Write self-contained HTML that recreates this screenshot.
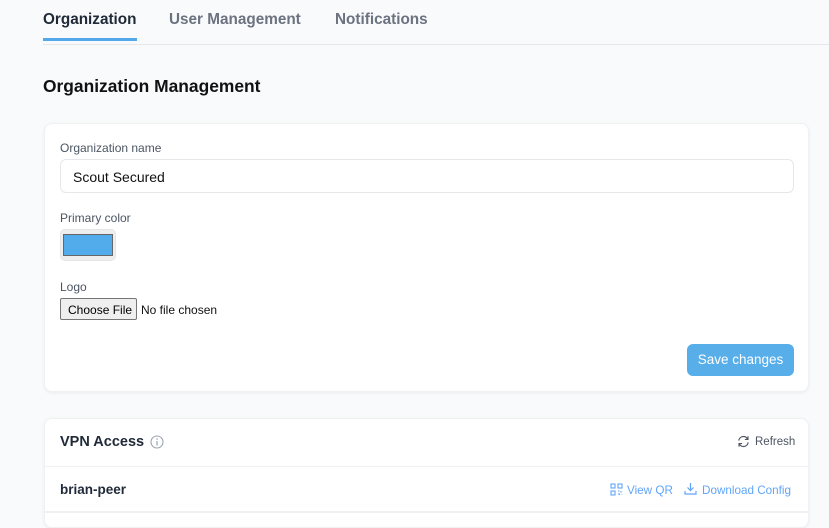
<!DOCTYPE html>
<html><head><meta charset="utf-8"><style>
*{box-sizing:border-box;margin:0;padding:0}
body{width:829px;height:519px;overflow:hidden;background:#f9fafb;font-family:"Liberation Sans",sans-serif;position:relative;color:#111827}
.a{position:absolute;white-space:nowrap}
.tab{font-size:15.3px;font-weight:bold;top:11px}
.card{position:absolute;left:44px;width:765px;background:#fff;border-radius:8px;box-shadow:0 1px 3px rgba(0,0,0,0.06);border:1px solid #f0f1f3}
.lbl{font-size:12px;color:#4b5563}
</style></head><body>
<div class="a tab" style="left:43px;color:#1f2937">Organization</div>
<div class="a tab" style="left:169px;color:#6b7280">User Management</div>
<div class="a tab" style="left:335px;color:#6b7280">Notifications</div>
<div class="a" style="left:43px;top:44px;width:786px;height:1px;background:#e5e7eb"></div>
<div class="a" style="left:43px;top:38px;width:94px;height:3px;background:#52a8e8"></div>
<div class="a" style="left:43px;top:76px;font-size:17.4px;font-weight:bold;color:#111">Organization Management</div>

<div class="card" style="top:123px;height:269px"></div>
<div class="a lbl" style="left:60px;top:141px">Organization name</div>
<div class="a" style="left:60px;top:159px;width:734px;height:34px;border:1px solid #e5e7eb;border-radius:6px;font-size:14px;padding:9px 12px;color:#111">Scout Secured</div>
<div class="a lbl" style="left:60px;top:211px">Primary color</div>
<div class="a" style="left:60px;top:229px;width:56px;height:32px;background:#eeeeee;border-radius:5px;border:1px solid #e5e5e5"></div>
<div class="a" style="left:63px;top:234px;width:50px;height:22px;background:#52acec;border:1px solid #666"></div>
<div class="a lbl" style="left:60px;top:280px">Logo</div>
<div class="a" style="left:60px;top:298px;width:77px;height:22px;background:#efefef;border:1px solid #767676;border-radius:2px;font-size:12px;padding:4px 0 0 7px;color:#000">Choose File</div>
<div class="a" style="left:141px;top:303px;font-size:12px;color:#111">No file chosen</div>
<div class="a" style="left:687px;top:344px;width:107px;height:32px;background:#57aee9;border-radius:6px;color:#fff;font-size:13.5px;text-align:center;line-height:32px">Save changes</div>

<div class="card" style="top:418px;height:110px"></div>
<div class="a" style="left:60px;top:434px;font-size:14.5px;font-weight:bold;color:#1f2937">VPN Access</div>
<svg class="a" style="left:150px;top:435px" width="14" height="14" viewBox="0 0 14 14"><circle cx="7" cy="7" r="6" fill="none" stroke="#9ca3af" stroke-width="1.1"/><line x1="7" y1="6" x2="7" y2="10.5" stroke="#9ca3af" stroke-width="1.2"/><circle cx="7" cy="4" r=".8" fill="#9ca3af"/></svg>
<svg class="a" style="left:737px;top:435px" width="13" height="13" viewBox="0 0 14 14" fill="none" stroke="#4b5563" stroke-width="1.3"><path d="M2 6A5 5 0 0 1 11.5 4.5M12 8A5 5 0 0 1 2.5 9.5"/><path d="M11.8 1.5v3.3H8.5M2.2 12.5V9.2h3.3"/></svg>
<div class="a" style="left:755px;top:436px;font-size:11.5px;color:#4b5563">Refresh</div>
<div class="a" style="left:44px;top:466px;width:765px;height:1px;background:#f0f1f3"></div>
<div class="a" style="left:60px;top:482px;font-size:13.5px;font-weight:bold;color:#1f2937">brian-peer</div>
<svg class="a" style="left:610px;top:483px" width="13" height="13" viewBox="0 0 13 13" fill="none" stroke="#60a5fa" stroke-width="1.1"><rect x="1" y="1" width="4" height="4"/><rect x="8" y="1" width="4" height="4"/><rect x="1" y="8" width="4" height="4"/><path d="M8 8h1.5M11 8v1.5M8 11h1.5v1M12 11.5v.5"/></svg>
<div class="a" style="left:627px;top:484px;font-size:11.7px;color:#60a5fa">View QR</div>
<svg class="a" style="left:684px;top:482px" width="13" height="13" viewBox="0 0 13 13" fill="none" stroke="#60a5fa" stroke-width="1.2"><path d="M6.5 1v7.5M3.5 5.5l3 3 3-3M1 9v3h11V9"/></svg>
<div class="a" style="left:702px;top:484px;font-size:11.7px;color:#60a5fa">Download Config</div>
<div class="a" style="left:44px;top:511px;width:765px;height:2px;background:#eef0f2"></div>
</body></html>
